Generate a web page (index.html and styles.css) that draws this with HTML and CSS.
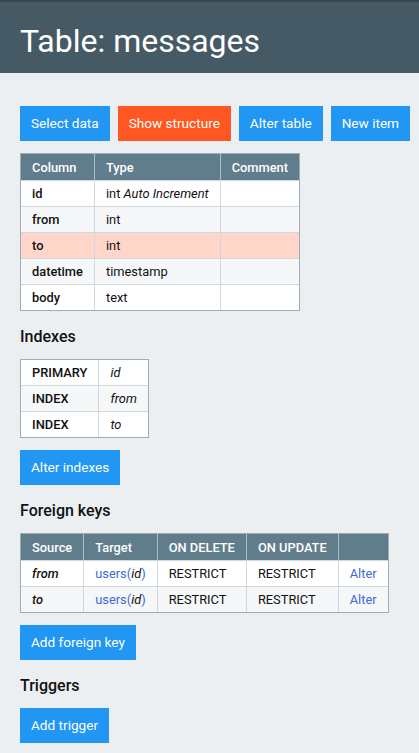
FILE: index.html
```html
<!DOCTYPE html>
<html>
<head>
<meta charset="utf-8">
<link rel="stylesheet" href="styles.css">
</head>
<body>
<header class="top">
  <h1 class="title">Table: messages</h1>
</header>
<main class="content">
  <nav class="actions">
    <a class="btn">Select data</a>
    <a class="btn btn-active">Show structure</a>
    <a class="btn">Alter table</a>
    <a class="btn">New item</a>
  </nav>

  <table class="grid structure">
    <thead>
      <tr><th>Column</th><th>Type</th><th>Comment</th></tr>
    </thead>
    <tbody>
      <tr><th>id</th><td>int <i>Auto Increment</i></td><td></td></tr>
      <tr class="alt"><th>from</th><td>int</td><td></td></tr>
      <tr class="hl"><th>to</th><td>int</td><td></td></tr>
      <tr class="alt"><th>datetime</th><td>timestamp</td><td></td></tr>
      <tr><th>body</th><td>text</td><td></td></tr>
    </tbody>
  </table>

  <h2 class="section">Indexes</h2>
  <table class="grid">
    <tbody>
      <tr><th>PRIMARY</th><td><i>id</i></td></tr>
      <tr class="alt"><th>INDEX</th><td><i>from</i></td></tr>
      <tr><th>INDEX</th><td><i>to</i></td></tr>
    </tbody>
  </table>
  <div class="btn-line"><a class="btn">Alter indexes</a></div>

  <h2 class="section">Foreign keys</h2>
  <table class="grid">
    <thead>
      <tr><th>Source</th><th>Target</th><th>ON DELETE</th><th>ON UPDATE</th><th></th></tr>
    </thead>
    <tbody>
      <tr><th><i>from</i></th><td><a class="link">users(<i class="plain">id</i>)</a></td><td>RESTRICT</td><td>RESTRICT</td><td><a class="link">Alter</a></td></tr>
      <tr class="alt"><th><i>to</i></th><td><a class="link">users(<i class="plain">id</i>)</a></td><td>RESTRICT</td><td>RESTRICT</td><td><a class="link">Alter</a></td></tr>
    </tbody>
  </table>
  <div class="btn-line"><a class="btn">Add foreign key</a></div>

  <h2 class="section">Triggers</h2>
  <div class="btn-line tight"><a class="btn">Add trigger</a></div>
</main>
</body>
</html>
```

FILE: styles.css
```css
html, body {
  margin: 0;
  padding: 0;
}
body {
  background: #eceff1;
  font-family: Roboto, "Liberation Sans", sans-serif;
  color: #111;
  font-size: 13px;
}
.top {
  background: #465a65;
  border-top: 2px solid #37474f;
  height: 71px;
  padding: 0 20px;
  box-sizing: content-box;
}
.title {
  margin: 0;
  padding-top: 20px;
  font-size: 32px;
  line-height: 38px;
  font-weight: 400;
  color: #fff;
}
.content {
  padding: 33px 20px 0;
}
.actions {
  display: flex;
  gap: 8px;
  margin-bottom: 12px;
}
.btn {
  display: inline-block;
  background: #2196f3;
  color: #fff;
  font-size: 13.6px;
  line-height: 35px;
  height: 35px;
  padding: 0 11px;
  text-decoration: none;
  white-space: nowrap;
}
.btn-active {
  background: #ff5722;
}
.grid {
  border-collapse: separate;
  border-spacing: 0;
  border: 1px solid #9eacb4;
  background: #fff;
  font-size: 12.85px;
}
.grid th, .grid td {
  padding: 3px 11px;
  line-height: 19px;
  height: 19px;
  text-align: left;
  white-space: nowrap;
  border-left: 1px solid #cfd8dc;
  border-top: 1px solid #cfd8dc;
}
.grid tr > :first-child {
  border-left: 0;
}
.grid thead tr:first-child > *,
.grid tbody:first-child tr:first-child > * {
  border-top: 0;
}
.grid thead th {
  background: #607d8b;
  color: #fff;
  font-weight: 500;
  padding-top: 4px;
  border-left-color: #b0bec5;
}
.grid thead th:first-child {
  border-left: 0;
}
.grid tbody th {
  font-weight: 500;
  color: #111;
}
.grid tr.alt > * {
  background: #f5f7f9;
}
.grid tr.hl > * {
  background: #ffd6c9;
}
.grid i {
  font-style: italic;
}
.link {
  color: #4169d6;
  text-decoration: none;
}
.link .plain {
  color: #111;
}
.section {
  margin: 16px 0 13px;
  font-size: 16px;
  line-height: 19px;
  font-weight: 500;
  color: #111;
}
.btn-line {
  margin-top: 12px;
  display: flex;
}
.btn-line.tight {
  margin-top: 9px;
}
```
